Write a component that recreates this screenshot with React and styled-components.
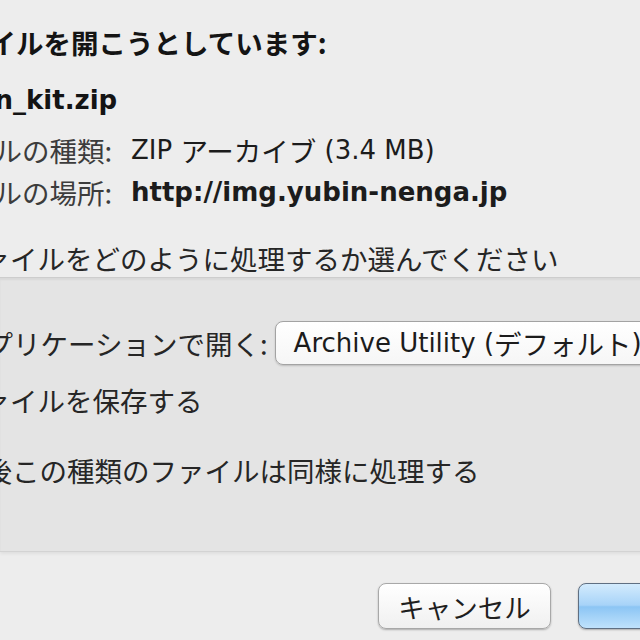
import React from 'react';
import styled, { createGlobalStyle } from 'styled-components';

const Global = createGlobalStyle`
  html, body { margin: 0; padding: 0; background: #ececec; overflow: hidden; }
  body { font-family: "Noto Sans CJK JP", "DejaVu Sans", sans-serif; }
`;

const Dialog = styled.div`
  width: 781px;
  background: #ededed;
  color: #1e1e1e;
  font-family: "Noto Sans CJK JP", "DejaVu Sans", sans-serif;
  font-size: 27.5px;
`;

const Top = styled.section`
  padding-top: 22px;
`;

const Line = styled.div`
  display: flex;
  align-items: center;
  height: ${p => p.$h || 40}px;
  margin-top: ${p => p.$mt || 0}px;
  white-space: nowrap;
  font-weight: ${p => (p.$bold ? 700 : 400)};
  color: ${p => (p.$bold ? '#141414' : '#262626')};
`;

const Cut = styled.span`
  display: inline-flex;
  justify-content: flex-end;
  width: ${p => p.$w}px;
  overflow: hidden;
  flex-shrink: 0;
  white-space: nowrap;
`;

const Latin = styled.span`
  font-family: "DejaVu Sans", sans-serif;
  font-size: 26px;
  font-weight: ${p => (p.$bold ? 700 : 400)};
  white-space: pre;
`;

const InfoGrid = styled.div`
  display: grid;
  grid-template-columns: 118px auto;
  grid-auto-rows: 40px;
  column-gap: 13px;
  row-gap: 2px;
  margin-top: 10px;
  white-space: nowrap;
`;

const Label = styled.div`
  display: flex;
  align-items: center;
  color: #3c3c3c;
`;

const Value = styled.div`
  display: flex;
  align-items: center;
  color: #1c1c1c;
`;

const Group = styled.section`
  background: #e4e4e4;
  border-top: 1px solid #cdcdcd;
  border-bottom: 1px solid #d3d3d3;
  box-shadow: inset 0 2px 2px rgba(0, 0, 0, 0.05), 0 2px 3px rgba(0, 0, 0, 0.06);
  padding: 42px 0 61px;
`;

const Select = styled.div`
  margin-left: 7px;
  width: 420px;
  height: 44px;
  box-sizing: border-box;
  display: flex;
  align-items: center;
  padding-left: 18px;
  background: linear-gradient(#ffffff, #f6f6f6);
  border: 1px solid #a3a3a3;
  border-radius: 8px;
  box-shadow: 0 1px 2px rgba(0, 0, 0, 0.18);
  color: #1c1c1c;
`;

const Bottom = styled.section`
  display: flex;
  justify-content: flex-end;
  gap: 27px;
  padding: 31px 30px 20px 0;
`;

const Button = styled.div`
  width: 173px;
  height: 46px;
  box-sizing: border-box;
  display: flex;
  align-items: center;
  justify-content: center;
  border-radius: 8px;
  font-size: 26.5px;
  color: #1e1e1e;
  border: 1px solid ${p => (p.$primary ? '#5f6f82' : '#a8a8a8')};
  background: ${p =>
    p.$primary
      ? 'linear-gradient(#d3ebfd, #a7d3f8 48%, #8cc5f4 52%, #bfe2fc)'
      : 'linear-gradient(#ffffff, #f0f0f0)'};
  box-shadow: 0 1px 2px rgba(0, 0, 0, 0.28);
`;

export default function App() {
  return (
    <>
      <Global />
      <Dialog>
        <Top>
          <Line $bold>
            <Cut $w={16}>次のファイ</Cut>ルを開こうとしています:
          </Line>
          <Line $bold $mt={18}>
            <Latin $bold>
              <Cut $w={13}>nenga_design</Cut>_kit.zip
            </Latin>
          </Line>
          <InfoGrid>
            <Label>
              <Cut $w={22}>ファイル</Cut>の種類:
            </Label>
            <Value>
              <Latin>ZIP </Latin>アーカイブ<Latin> (3.4 MB)</Latin>
            </Value>
            <Label>
              <Cut $w={22}>ファイル</Cut>の場所:
            </Label>
            <Value>
              <Latin $bold>http://img.yubin-nenga.jp</Latin>
            </Value>
          </InfoGrid>
          <Line $mt={27} $h={38}>
            <Cut $w={10}>このファ</Cut>イルをどのように処理するか選んでください
          </Line>
        </Top>
        <Group>
          <Line $h={46}>
            <Cut $w={13}>アプ</Cut>リケーションで開く:
            <Select>
              <Latin>Archive Utility (</Latin>デフォルト<Latin>)</Latin>
            </Select>
          </Line>
          <Line $mt={14}>
            <Cut $w={10}>ファ</Cut>イルを保存する
          </Line>
          <Line $mt={30}>
            <Cut $w={12}>今後</Cut>この種類のファイルは同様に処理する
          </Line>
        </Group>
        <Bottom>
          <Button>キャンセル</Button>
          <Button $primary>OK</Button>
        </Bottom>
      </Dialog>
    </>
  );
}
